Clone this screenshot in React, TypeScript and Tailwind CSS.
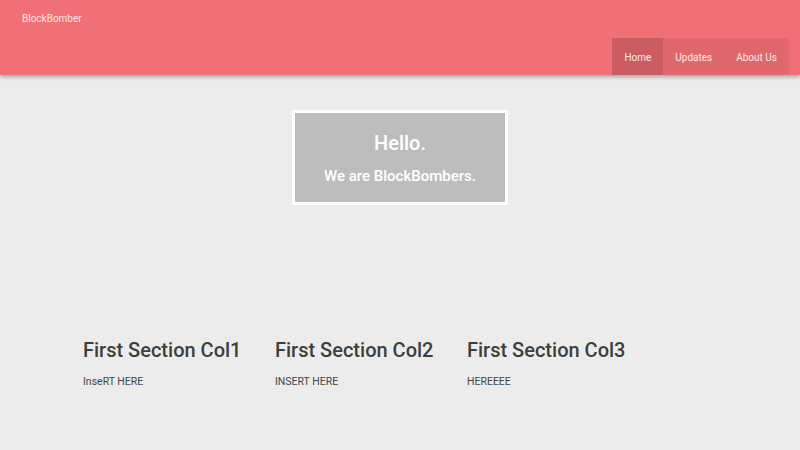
import React from "react";

export default function App() {
  return (
    <div className="min-h-[450px] w-full bg-[#ececec]" style={{ fontFamily: "Roboto, 'Liberation Sans', sans-serif" }}>
      <header className="relative z-10 h-[75px] bg-[#f07075] shadow-[0_2px_4px_rgba(0,0,0,0.3)]">
        <div className="flex h-full flex-col justify-between">
          <div className="pl-[22px] pt-[12px] text-[10px] leading-[14px] text-[#fde4e6]">BlockBomber</div>
          <div className="flex justify-end pr-[11px]">
            <ul className="flex h-[37px] bg-[#e0676c] text-[10px] text-[#fde9ea]">
              <li className="flex items-center bg-[#cb5d62] px-[12px] pt-[1px]">Home</li>
              <li className="flex items-center px-[12px] pt-[1px]">Updates</li>
              <li className="flex items-center px-[12px] pt-[1px]">About Us</li>
            </ul>
          </div>
        </div>
      </header>
      <main className="flex flex-col items-center pt-[35px]">
        <div className="flex h-[95px] w-[216px] flex-col items-center border-[3px] border-white bg-[#bdbdbd] pt-[18px] font-medium text-white">
          <div className="text-[20px] leading-[24px]">Hello.</div>
          <div className="mt-[11px] text-[15px] leading-[20px]">We are BlockBombers.</div>
        </div>
      </main>
      <section className="ml-[83px] mt-[133px] grid w-[576px] grid-cols-3">
        {[
          ["First Section Col1", "InseRT HERE"],
          ["First Section Col2", "INSERT HERE"],
          ["First Section Col3", "HEREEEE"],
        ].map(([h, p]) => (
          <div key={h}>
            <h2 className="text-[20px] font-medium leading-[24px] text-[#3e3e3e]">{h}</h2>
            <p className="mt-[13px] text-[10.5px] leading-[14px] text-[#444]">{p}</p>
          </div>
        ))}
      </section>
    </div>
  );
}
